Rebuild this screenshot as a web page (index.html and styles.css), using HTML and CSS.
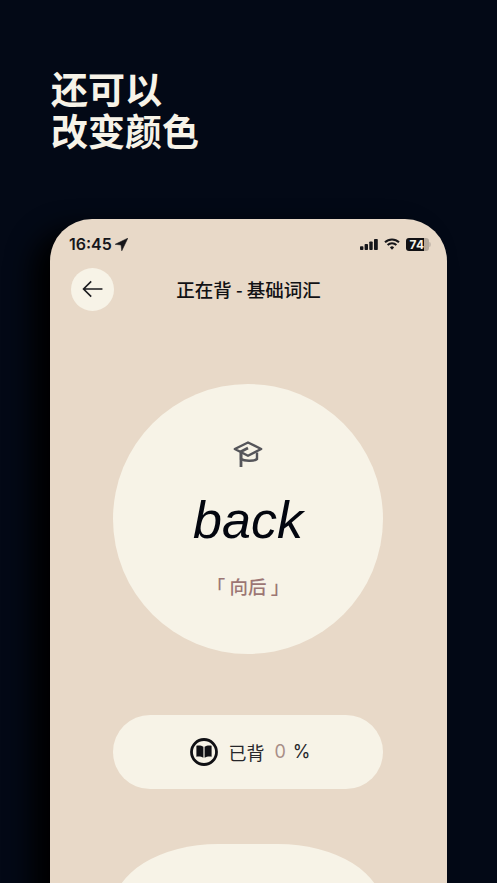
FILE: index.html
```html
<!DOCTYPE html>
<html lang="zh">
<head>
<meta charset="utf-8">
<title>还可以改变颜色</title>
<link rel="stylesheet" href="styles.css">
</head>
<body>
<main class="screen">
  <h1 class="headline"><span class="headline-line">还可以</span><span class="headline-line">改变颜色</span></h1>
  <section class="phone">
    <div class="status">
      <div class="status-left">
        <span class="time">16:45</span>
        <svg class="loc" viewBox="0 0 14 14"><path d="M13.800.2.200 6.800l6.300.7.800 6.300z" fill="#16161a" stroke="#16161a" stroke-width=".6" stroke-linejoin="round"/></svg>
      </div>
      <div class="status-right">
        <svg class="signal" viewBox="0 0 18 11"><rect x="0" y="7.200" width="3.400" height="3.800" rx=".8"/><rect x="4.600" y="5" width="3.400" height="6" rx=".8"/><rect x="9.300" y="2.500" width="3.400" height="8.500" rx=".8"/><rect x="14" y="0" width="3.800" height="11" rx=".8"/></svg>
        <svg class="wifi" viewBox="0 0 16 12"><path d="M1 4.300a10 10 0 0 1 14 0" fill="none" stroke="#16161a" stroke-width="2"/><path d="M3.600 7a6.300 6.300 0 0 1 8.800 0" fill="none" stroke="#16161a" stroke-width="2"/><path d="M8 11.800 5.900 9.400a3 3 0 0 1 4.200 0z" fill="#16161a"/></svg>
        <div class="battery"><span class="battery-num">74</span><span class="battery-rest"></span><span class="battery-cap"></span></div>
      </div>
    </div>
    <header class="nav">
      <button class="back" aria-label="返回">
        <svg viewBox="0 0 24 20" class="back-icon"><path d="M22.500 10H1.800M10 1.500 1.500 10l8.500 8.500" fill="none" stroke="#1a1a1e" stroke-width="1.800"/></svg>
      </button>
      <div class="nav-title">正在背 - 基础词汇</div>
    </header>
    <div class="word-card">
      <svg class="cap" viewBox="0 0 30 26"><path d="M15 1.500 1.800 8 15 14.800 28.200 8z" fill="none" stroke="#55555a" stroke-width="2.400" stroke-linejoin="round"/><path d="M8 12v6c3 2 13 2.800 16 0v-6.500" fill="none" stroke="#55555a" stroke-width="2.400"/><path d="M15 7 8 10.500V26" fill="none" stroke="#55555a" stroke-width="2.800"/></svg>
      <div class="word">back</div>
      <div class="meaning">「 向后 」</div>
    </div>
    <div class="progress">
      <svg class="book" viewBox="0 0 28 28"><circle cx="14" cy="14" r="12.500" fill="none" stroke="#101014" stroke-width="2.800"/><path d="M13.400 8.700c-1.900-1.300-5-1.500-7-.9v11c2-.5 5-.3 7 .9zM14.600 8.700c1.900-1.300 5-1.500 7-.9v11c-2-.5-5-.3-7 .9z" fill="#101014"/></svg>
      <span class="progress-label">已背</span>
      <span class="progress-value">0</span>
      <span class="progress-unit">%</span>
    </div>
    <div class="next-card"></div>
  </section>
</main>
</body>
</html>
```
FILE: styles.css
```css
* { box-sizing: border-box; }
html, body { margin: 0; height: 100%; }
body {
  background: #030916;
  overflow: hidden;
  font-family: "Inter", "Noto Sans CJK SC", sans-serif;
}
.screen {
  height: 883px;
  padding: 67px 50px 0;
  overflow: hidden;
}
.headline {
  margin: 0 0 68px;
  padding-left: 1px;
  font: 700 37px/42px "Noto Sans CJK SC", sans-serif;
  color: #f7f3e8;
}
.headline-line { display: block; height: 42px; }
.phone {
  width: 397px;
  height: 760px;
  background: #e8d9c8;
  border-radius: 42px 42px 0 0;
  box-shadow: -18px 10px 26px #000;
  display: flex;
  flex-direction: column;
  align-items: center;
}
.status {
  width: 100%;
  height: 49px;
  padding: 15px 16px 0 19px;
  display: flex;
  justify-content: space-between;
  align-items: flex-start;
}
.status-left, .status-right { display: flex; align-items: center; }
.time {
  font: 600 16px/20px "Inter", sans-serif;
  color: #16161a;
}
.loc { width: 13px; height: 13px; margin-left: 3px; }
.status-right { height: 20px; }
.signal { width: 18px; height: 11px; fill: #16161a; }
.wifi { width: 16px; height: 12px; margin-left: 6px; }
.battery {
  width: 25px;
  height: 13px;
  margin-left: 6px;
  display: flex;
  align-items: center;
}
.battery-num {
  width: 18px;
  height: 13px;
  background: #111114;
  border-radius: 3px 0 0 3px;
  color: #f7f3e8;
  font: 700 12px/13px "Inter", sans-serif;
  text-align: right;
}
.battery-rest {
  width: 5px;
  height: 13px;
  background: #b5aa9d;
  border-radius: 0 3px 3px 0;
}
.battery-cap {
  width: 2px;
  height: 5px;
  background: #c9bdb0;
  border-radius: 0 2px 2px 0;
}
.nav {
  width: 100%;
  height: 42px;
  padding-left: 21px;
  position: relative;
  display: flex;
  align-items: center;
}
.back {
  width: 43px;
  height: 43px;
  padding: 0;
  border: 0;
  border-radius: 50%;
  background: #f7f3e7;
  display: flex;
  align-items: center;
  justify-content: center;
}
.back-icon { width: 22px; height: 18px; }
.nav-title {
  position: absolute;
  left: 0;
  right: 0;
  text-align: center;
  font: 500 18.500px/24px "Noto Sans CJK SC", sans-serif;
  color: #111114;
}
.word-card {
  width: 270px;
  height: 270px;
  margin: 74px 1px 0 0;
  flex: none;
  border-radius: 50%;
  background: #f7f3e7;
  display: flex;
  flex-direction: column;
  align-items: center;
  padding-top: 57px;
}
.cap { width: 30px; height: 26px; }
.word {
  margin-top: 21px;
  font: italic 400 52px/64px "Liberation Sans", sans-serif;
  color: #03060f;
}
.meaning {
  margin-top: 21px;
  font: 500 18.500px/26px "Noto Sans CJK SC", sans-serif;
  color: #9c7674;
}
.progress {
  width: 270px;
  height: 74px;
  margin: 61px 1px 0 0;
  padding-left: 5px;
  flex: none;
  border-radius: 37px;
  background: #f7f3e7;
  display: flex;
  align-items: center;
  justify-content: center;
  color: #26262a;
}
.book { width: 28px; height: 28px; }
.progress-label {
  margin-left: 10px;
  font: 400 18px/26px "Noto Sans CJK SC", sans-serif;
}
.progress-value {
  margin-left: 10px;
  font: 400 18px/26px "Inter", sans-serif;
  color: #a88e88;
}
.progress-unit {
  margin-left: 7px;
  font: 400 18px/26px "Inter", sans-serif;
}
.next-card {
  width: 270px;
  height: 120px;
  margin: 55px 1px 0 0;
  flex: none;
  border-radius: 105px 105px 0 0 / 65px 65px 0 0;
  background: #f7f3e7;
}
```
